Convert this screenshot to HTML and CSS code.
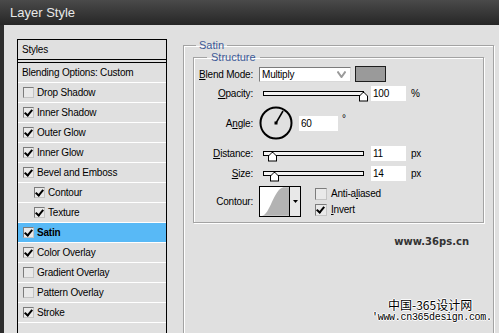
FILE: index.html
```html
<!DOCTYPE html>
<html lang="en">
<head>
<meta charset="UTF-8" />
<title>Layer Style</title>
<link rel="stylesheet" href="styles.css">
</head>
<body>
<div class="window">
  <div class="titlebar">Layer Style</div>

  <div class="content">
    <div class="styles-list">
      <div class="list-head">Styles</div>
      <div class="row blending">Blending Options: Custom</div>
      <div class="row"><span class="cb"></span>Drop Shadow</div>
      <div class="row"><span class="cb on"></span>Inner Shadow</div>
      <div class="row"><span class="cb on"></span>Outer Glow</div>
      <div class="row"><span class="cb on"></span>Inner Glow</div>
      <div class="row"><span class="cb on"></span>Bevel and Emboss</div>
      <div class="row sub"><span class="cb on"></span>Contour</div>
      <div class="row sub"><span class="cb on"></span>Texture</div>
      <div class="row selected"><span class="cb on"></span>Satin</div>
      <div class="row"><span class="cb on"></span>Color Overlay</div>
      <div class="row"><span class="cb"></span>Gradient Overlay</div>
      <div class="row"><span class="cb"></span>Pattern Overlay</div>
      <div class="row"><span class="cb on"></span>Stroke</div>
    </div>

    <div class="panel">
      <fieldset class="group satin">
        <legend>Satin</legend>
        <fieldset class="group structure">
          <legend>Structure</legend>

          <div class="field blend">
            <label><u>B</u>lend Mode:</label>
            <div class="select">
              <span>Multiply</span>
              <svg class="chev" width="9" height="7" viewBox="0 0 9 7"><path d="M0.5,0.5 L4.5,6 L8.5,0.5" fill="none" stroke="#9a9a9a" stroke-width="2"/></svg>
            </div>
            <span class="swatch"></span>
          </div>

          <div class="field opacity">
            <label><u>O</u>pacity:</label>
            <div class="track"><span class="thumb" style="left:95px"></span></div>
            <input class="num" type="text" value="100" />
            <span class="unit">%</span>
          </div>

          <div class="field angle">
            <label>A<u>n</u>gle:</label>
            <svg class="dial" width="34" height="34" viewBox="0 0 34 34">
              <circle cx="17" cy="17" r="15.5" fill="none" stroke="#000" stroke-width="2"/>
              <line x1="17" y1="17" x2="24" y2="5" stroke="#000" stroke-width="1.5"/>
              <rect x="15.5" y="15.5" width="3" height="3" fill="#000"/>
            </svg>
            <input class="num angle-num" type="text" value="60" />
            <span class="deg">°</span>
          </div>

          <div class="field distance">
            <label><u>D</u>istance:</label>
            <div class="track"><span class="thumb" style="left:4px"></span></div>
            <input class="num" type="text" value="11" />
            <span class="unit">px</span>
          </div>

          <div class="field size">
            <label><u>S</u>ize:</label>
            <div class="track"><span class="thumb" style="left:6px"></span></div>
            <input class="num" type="text" value="14" />
            <span class="unit">px</span>
          </div>

          <div class="field contour">
            <label>Contour:</label>
            <div class="contour-box">
              <svg class="curve" width="30" height="29" viewBox="0 0 30 29">
                <path d="M2,29 C10,29 14,2 24,0 L30,0 L30,29 Z" fill="#b3b3b3"/>
              </svg>
              <span class="drop">
                <svg width="5" height="3" viewBox="0 0 5 3"><path d="M0,0 L5,0 L2.5,3 Z" fill="#000"/></svg>
              </span>
            </div>
            <div class="options">
              <div class="opt"><span class="cb"></span>Anti-a<u>l</u>iased</div>
              <div class="opt"><span class="cb on"></span><u>I</u>nvert</div>
            </div>
          </div>
        </fieldset>

        <div class="credit">www.36ps.cn</div>
      </fieldset>
    </div>
  </div>

  <div class="watermark">
    <div class="wm-cn">中国-365设计网</div>
    <div class="wm-url">'www.cn365design.com.</div>
  </div>
</div>
</body>
</html>
```

FILE: styles.css
```css
html, body { margin: 0; padding: 0; }
body { width: 499px; height: 333px; overflow: hidden; background: #e0e0e0; color: #000; font-family: "Liberation Sans", Arial, sans-serif; font-size: 10px; letter-spacing: -0.2px; }

.window { position: relative; width: 499px; height: 333px; overflow: hidden; }
.titlebar { height: 25px; line-height: 26px; padding-left: 10px; font-size: 13px; letter-spacing: 0; color: #e8e8e8; background: linear-gradient(#4a4a4a, #262626); }

.content { display: flex; align-items: flex-start; height: 308px; overflow: hidden; border-left: 4px solid #2d2d2d; }

/* styles list */
.styles-list { margin: 14px 0 0 13px; width: 148px; height: 294px; border: 1px solid #000; border-bottom: none; }
.list-head { height: 19px; display: flex; align-items: center; padding-left: 4px; border-bottom: 1px solid #000; margin-bottom: 2px; }
.row { height: 19px; display: flex; align-items: center; padding-left: 5px; border-bottom: 1px solid #fff; }
.row.blending { padding-left: 4px; border-top: 1px solid #000; }
.row.sub { padding-left: 16px; }
.row.selected { background: #58b9f6; font-weight: bold; }

.cb { display: inline-block; position: relative; width: 11px; height: 11px; box-sizing: border-box; margin-right: 3px; border: 1px solid; border-color: #7c7c7c #c4c4c4 #c4c4c4 #7c7c7c; background: #e9e9e9; }
.cb.on::after { content: ""; position: absolute; left: 2px; top: 0px; width: 3px; height: 6px; border: solid #000; border-width: 0 2px 2px 0; transform: rotate(40deg); }

/* right panel */
.panel { margin: 14px 0 0 16px; }
.group { margin: 0; border: 1px solid #a3a3a3; box-shadow: 1px 1px 0 #fff, inset 1px 1px 0 #fff; }
.group legend { font-size: 11px; line-height: 12px; color: #3d5a98; letter-spacing: 0; }
.satin { width: 311px; height: 300px; box-sizing: border-box; padding: 0 9px; border-bottom: none; }
.satin > legend { margin-left: 3px; padding: 0 3px; }
.structure { padding: 2px 0 5px 0; }
.structure > legend { margin-left: 13px; padding: 0 4px; }

.field { display: flex; align-items: center; }
.field label { width: 59px; text-align: right; flex: none; }
.blend { height: 18px; }
.opacity { height: 16px; margin-top: 2px; }
.angle { height: 34px; margin-top: 5px; }
.distance { height: 16px; margin-top: 5px; }
.size { height: 16px; margin-top: 4px; }
.contour { height: 31px; margin-top: 5px; }

.select { display: flex; align-items: center; justify-content: space-between; margin-left: 6px; width: 92px; height: 15px; box-sizing: border-box; padding: 0 4px 0 2px; background: #fff; border: 1px solid; border-color: #7c7c7c #d8d8d8 #d8d8d8 #7c7c7c; }
.swatch { margin-left: 4px; width: 31px; height: 16px; box-sizing: border-box; background: #9a9a9a; border: 1px solid #1e1e1e; }

.track { position: relative; margin-left: 10px; width: 101px; height: 5px; box-sizing: border-box; border: 1px solid #000; background: #f2f2f2; }
.thumb { position: absolute; top: 0; width: 9px; height: 10px; background: #000; clip-path: polygon(50% 0, 100% 45%, 100% 100%, 0 100%, 0 45%); }
.thumb::after { content: ""; position: absolute; left: 1px; top: 1px; width: 7px; height: 8px; background: #fff; clip-path: polygon(50% 0, 100% 45%, 100% 100%, 0 100%, 0 45%); }

.num { margin-left: 7px; width: 35px; height: 15px; box-sizing: border-box; padding: 1px 2px 0; border: none; outline: none; background: #fff; font-family: inherit; font-size: 10px; letter-spacing: -0.2px; color: #000; }
.unit { margin-left: 5px; }
.dial { margin-left: 6px; }
.angle-num { margin-left: 6px; width: 39px; }
.deg { margin-left: 4px; align-self: flex-start; margin-top: 7px; }

.contour-box { display: flex; margin-left: 6px; width: 42px; height: 31px; box-sizing: border-box; border: 1px solid #000; background: #fff; }
.curve { display: block; margin-top: 0; }
.drop { display: flex; align-items: center; justify-content: center; width: 10px; border-left: 1px solid #000; background: #e8e8e8; }
.options { margin-left: 14px; display: flex; flex-direction: column; gap: 3px; }
.opt { display: flex; align-items: center; height: 13px; }
.opt .cb { width: 12px; height: 12px; margin-right: 4px; }

.credit { margin: 13px 15px 0 0; text-align: right; font-family: "DejaVu Sans", sans-serif; font-weight: bold; font-size: 10px; letter-spacing: 0; color: #333; }

/* watermark over the dialog */
.watermark { position: absolute; left: 372px; top: 298px; color: #000; text-shadow: 1px 0 #fff, -1px 0 #fff, 0 1px #fff, 0 -1px #fff; letter-spacing: 0; }
.wm-cn { padding-left: 16px; font-family: "Noto Sans CJK SC", sans-serif; font-size: 12px; line-height: 14px; }
.wm-url { font-family: "Liberation Mono", monospace; font-size: 10px; line-height: 11px; letter-spacing: -0.3px; }
```
